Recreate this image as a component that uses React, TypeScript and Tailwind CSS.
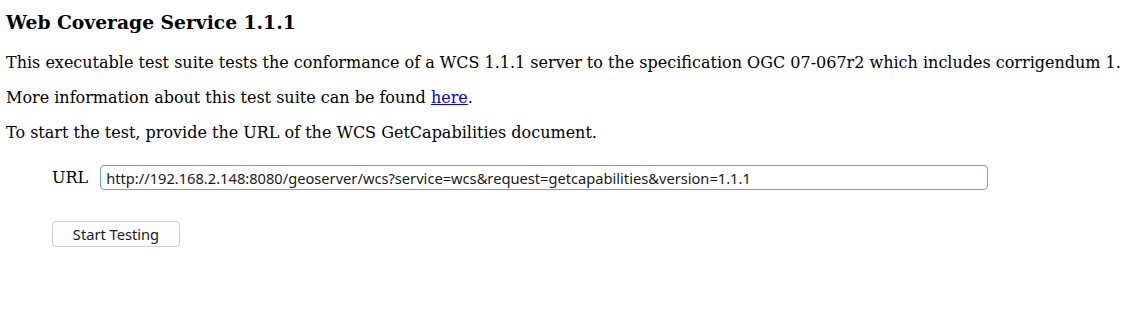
export default function App() {
  return (
    <div className="min-h-[311px] bg-white px-[6px] text-black font-['DejaVu_Serif',serif]">
      <h3 className="pt-[11px] text-[18.72px] font-bold leading-[22px]">Web Coverage Service 1.1.1</h3>
      <p className="mt-[20px] text-[16px] leading-[19px]">
        This executable test suite tests the conformance of a WCS 1.1.1 server to the specification OGC 07-067r2 which includes corrigendum 1.
      </p>
      <p className="mt-[16px] text-[16px] leading-[19px]">
        More information about this test suite can be found{' '}
        <a href="#" className="text-[#0000ee] underline">here</a>.
      </p>
      <p className="mt-[16px] text-[16px] leading-[19px]">
        To start the test, provide the URL of the WCS GetCapabilities document.
      </p>
      <div className="ml-[46px] mt-[23px] flex items-center gap-[12px]">
        <label className="text-[16px] leading-[19px]">URL</label>
        <input
          type="text"
          defaultValue="http://192.168.2.148:8080/geoserver/wcs?service=wcs&request=getcapabilities&version=1.1.1"
          className="h-[25px] w-[888px] rounded-[4px] border-[1.5px] border-[#5ea5ee] px-[5px] font-['Noto_Sans',sans-serif] text-[14.67px] text-[#1a1a1a] outline-none"
        />
      </div>
      <button className="ml-[46px] mt-[31px] h-[26px] w-[128px] rounded-[4px] border border-[#cfcfcf] bg-[#fdfdfd] font-['Noto_Sans',sans-serif] text-[14.67px] text-[#1a1a1a]">
        Start Testing
      </button>
    </div>
  );
}
